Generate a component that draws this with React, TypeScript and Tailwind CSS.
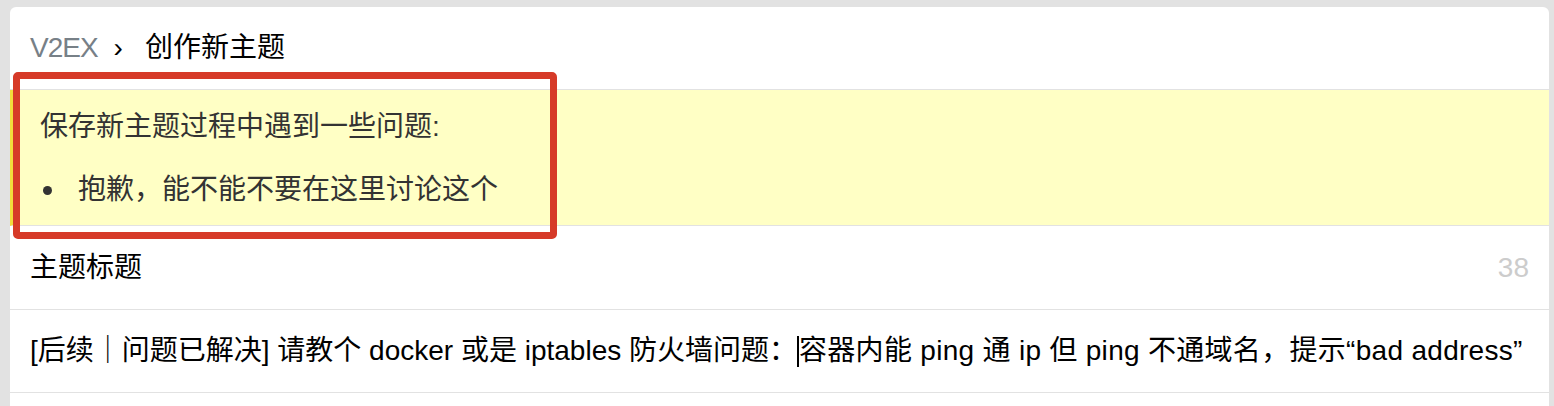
import React from "react";

const FONT = '"Liberation Sans", "Noto Sans CJK SC", sans-serif';

export default function App() {
  return (
    <div
      className="min-h-screen bg-[#e2e2e2] pt-[7px] pl-[10px] pr-[5px]"
      style={{ fontFamily: FONT }}
    >
      <div className="relative bg-white rounded-t-[6px] min-h-[399px]">
        {/* header */}
        <div className="flex items-center h-[83px] border-b border-[#e2e2e2] px-5 text-[28px] text-black">
          <span className="text-[#778087] tracking-[-1px]">V2EX</span>
          <span className="ml-[16px] mr-[22px]">›</span>
          <span>创作新主题</span>
        </div>

        {/* problem */}
        <div className="h-[136px] border-b border-[#e2e2e2] border-l-[3px] border-l-[#f2dc3c] bg-[#ffffc5] pl-[27px] pt-[19px] text-[28px] text-[#333]">
          <div className="leading-[36px]">保存新主题过程中遇到一些问题:</div>
          <ul className="mt-[27px]">
            <li className="flex items-center leading-[36px]">
              <span className="ml-[3px] mr-[26px] inline-block w-[9px] h-[9px] rounded-full bg-[#333]" />
              <span>抱歉，能不能不要在这里讨论这个</span>
            </li>
          </ul>
        </div>

        {/* title row */}
        <div className="flex items-center justify-between h-[84px] border-b border-[#e2e2e2] px-5 text-[28px] text-black">
          <span>主题标题</span>
          <span className="text-[#cccccc]">38</span>
        </div>

        {/* input row */}
        <div className="flex items-center h-[83px] border-b border-[#e2e2e2] px-5 text-[28px] text-black whitespace-nowrap">
          <span>[后续｜问题已解决] 请教个 docker 或是 iptables 防火墙问题：</span>
          <span className="inline-block w-[2px] h-[31px] bg-black" />
          <span className="tracking-[0.3px]">容器内能 ping 通 ip 但 ping 不通域名，提示“bad address”</span>
        </div>

        {/* annotation overlay */}
        <div className="absolute left-[3px] top-[65px] w-[544px] h-[167px] border-[7px] border-[#d63a28] rounded-[5px] pointer-events-none" />
      </div>
    </div>
  );
}
